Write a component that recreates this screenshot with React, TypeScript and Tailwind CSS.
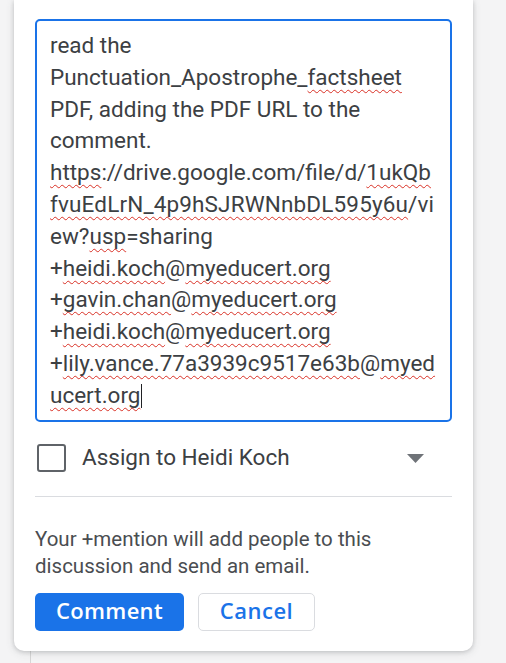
import React from "react";

const W = ({ children }: { children: React.ReactNode }) => (
  <span className="underline decoration-wavy decoration-[#d93025] decoration-[1px] underline-offset-[4px] [text-decoration-skip-ink:none]">
    {children}
  </span>
);

export default function App() {
  const lines: { node: React.ReactNode; cls?: string }[] = [
    { node: <>read the</> },
    {
      node: (
        <>
          Punctuation_Apostrophe_<W>factsheet</W>
        </>
      ),
    },
    { node: <>PDF, adding the PDF URL to the</> },
    { node: <>comment.</> },
    {
      node: (
        <>
          <W>https</W>://drive.google.com/file/d/<W>1ukQb</W>
        </>
      ),
    },
    {
      node: (
        <>
          <W>fvuEdLrN_4p9hSJRWNnbDL595y6u</W>/vi
        </>
      ),
      cls: "tracking-[0.15px]",
    },
    {
      node: (
        <>
          ew?<W>usp</W>=sharing
        </>
      ),
    },
    {
      node: (
        <>
          +<W>heidi.koch</W>@<W>myeducert.org</W>
        </>
      ),
    },
    {
      node: (
        <>
          +<W>gavin.chan</W>@<W>myeducert.org</W>
        </>
      ),
    },
    {
      node: (
        <>
          +<W>heidi.koch</W>@<W>myeducert.org</W>
        </>
      ),
    },
    {
      node: (
        <>
          +<W>lily.vance.77a3939c9517e63b</W>@<W>myed</W>
        </>
      ),
    },
    {
      node: (
        <>
          <W>ucert.org</W>
          <span className="inline-block w-px h-[24px] bg-[#202124] align-[-5px] ml-[1px]" />
        </>
      ),
    },
  ];

  return (
    <div
      className="w-[506px] h-[663px] bg-[#f4f4f5] flex overflow-hidden"
      style={{ fontFamily: "Roboto, 'Liberation Sans', sans-serif" }}
    >
      <div className="w-[14px] shrink-0" />
      <div className="w-[459px] shrink-0 flex flex-col">
        <div className="relative z-10 bg-white rounded-b-[10px] shadow-[0_1px_4px_rgba(60,64,67,0.22),0_2px_10px_rgba(60,64,67,0.12)] px-[21px] pt-[19px] pb-[20px]">
          <div className="h-[403px] border-2 border-[#1a73e8] rounded-[5px] pl-[13px] pr-[6px] pt-[9px] text-[22.5px] leading-[31.8px] text-[#3c4043] whitespace-nowrap">
            {lines.map((l, i) => (
              <div key={i} className={l.cls}>
                {l.node}
              </div>
            ))}
          </div>
          <div className="mt-[14px] h-[44px] flex items-center pl-[2px]">
            <div className="w-[29px] h-[28px] border-2 border-[#5f6368] rounded-[3px] shrink-0" />
            <span className="ml-[16px] text-[22.5px] text-[#3c4043]">Assign to Heidi Koch</span>
            <svg className="ml-auto mr-[28px]" width="17" height="9" viewBox="0 0 17 9">
              <path d="M0 0 L17 0 L8.5 9 Z" fill="#6f7378" />
            </svg>
          </div>
          <div className="mt-[16px] h-px bg-[#dadce0]" />
          <div className="mt-[29px] text-[20.5px] leading-[27px] text-[#4a4d51] whitespace-nowrap">
            Your +mention will add people to this
            <br />
            discussion and send an email.
          </div>
          <div className="mt-[13px] flex gap-[14px]">
            <button
              className="w-[149px] h-[38px] bg-[#1a73e8] rounded-[5px] text-white text-[22px] leading-none pb-[4px] font-semibold tracking-[0.3px]"
              style={{ fontFamily: "'Open Sans', Roboto, sans-serif" }}
            >
              Comment
            </button>
            <button
              className="w-[117px] h-[38px] bg-white border border-[#dadce0] rounded-[5px] text-[#1a73e8] text-[22px] leading-none pb-[4px] font-semibold tracking-[0.5px]"
              style={{ fontFamily: "'Open Sans', Roboto, sans-serif" }}
            >
              Cancel
            </button>
          </div>
        </div>
        <div className="flex-1 flex">
          <div className="w-[16px]" />
          <div className="w-px bg-[#d6d6d6]" />
        </div>
      </div>
      <div className="flex-1" />
    </div>
  );
}
